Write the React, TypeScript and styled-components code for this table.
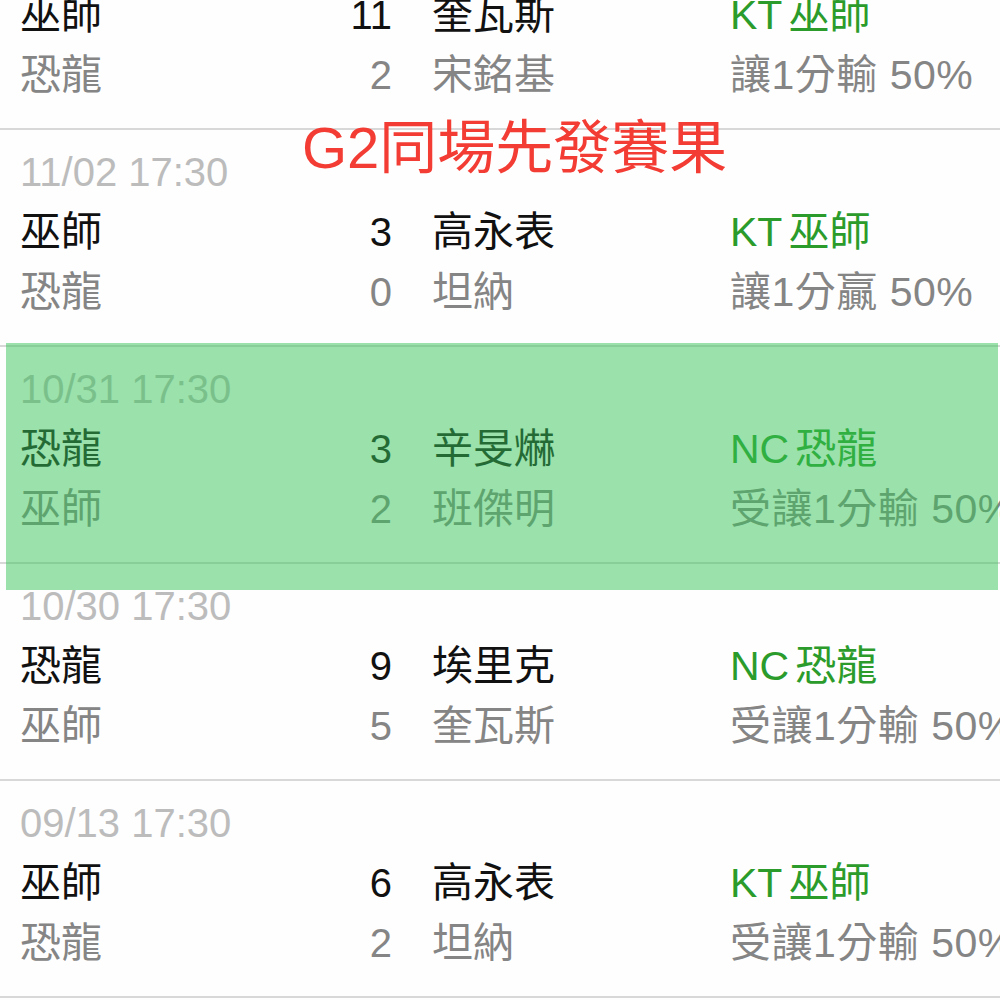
import React from 'react';
import styled, { createGlobalStyle } from 'styled-components';

type Match = {
  date?: string;
  home: string;
  away: string;
  homeScore: number;
  awayScore: number;
  homePitcher: string;
  awayPitcher: string;
  pick: string;
  result: string;
};

const matches: Match[] = [
  {
    home: '巫師',
    away: '恐龍',
    homeScore: 11,
    awayScore: 2,
    homePitcher: '奎瓦斯',
    awayPitcher: '宋銘基',
    pick: 'KT巫師',
    result: '讓1分輸 50%',
  },
  {
    date: '11/02 17:30',
    home: '巫師',
    away: '恐龍',
    homeScore: 3,
    awayScore: 0,
    homePitcher: '高永表',
    awayPitcher: '坦納',
    pick: 'KT巫師',
    result: '讓1分贏 50%',
  },
  {
    date: '10/31 17:30',
    home: '恐龍',
    away: '巫師',
    homeScore: 3,
    awayScore: 2,
    homePitcher: '辛旻爀',
    awayPitcher: '班傑明',
    pick: 'NC恐龍',
    result: '受讓1分輸 50%',
  },
  {
    date: '10/30 17:30',
    home: '恐龍',
    away: '巫師',
    homeScore: 9,
    awayScore: 5,
    homePitcher: '埃里克',
    awayPitcher: '奎瓦斯',
    pick: 'NC恐龍',
    result: '受讓1分輸 50%',
  },
  {
    date: '09/13 17:30',
    home: '巫師',
    away: '恐龍',
    homeScore: 6,
    awayScore: 2,
    homePitcher: '高永表',
    awayPitcher: '坦納',
    pick: 'KT巫師',
    result: '受讓1分輸 50%',
  },
];

const GlobalStyle = createGlobalStyle`
  html, body {
    margin: 0;
    padding: 0;
    background: #fefefe;
    overflow: hidden;
  }
  body {
    font-family: "Liberation Sans", "Noto Sans CJK TC", sans-serif;
  }
`;

const Page = styled.div`
  position: relative;
  width: 1000px;
  height: 1000px;
  overflow: hidden;
`;

// first block is scrolled partly off the top
const List = styled.div`
  margin-top: -87px;
  display: flex;
  flex-direction: column;
`;

const MatchBlock = styled.div`
  height: 217px;
  padding: 12px 0 0 20px;
  box-sizing: border-box;
  border-bottom: 2px solid #d8d8d8;
`;

const DateLine = styled.div`
  height: 60px;
  line-height: 60px;
  font-size: 40px;
  color: #bcbcbc;
`;

const Grid = styled.div`
  display: grid;
  grid-template-columns: 300px 72px 338px 1fr;
  grid-auto-rows: 60px;
  align-items: center;
  white-space: nowrap;
`;

const Cell = styled.div<{ $muted?: boolean }>`
  line-height: 60px;
  font-size: 41px;
  color: ${({ $muted }) => ($muted ? '#858585' : '#111')};
`;

const Score = styled(Cell)`
  text-align: right;
  font-size: 40px;
`;

const Pitcher = styled(Cell)`
  padding-left: 40px;
`;

const Pick = styled(Cell)`
  color: #2b9c2b;
  word-spacing: 0;

  span {
    margin-left: 6px;
  }
`;

const Result = styled(Cell)`
  color: #858585;
  letter-spacing: 0.5px;
`;

const Highlight = styled.div`
  position: absolute;
  top: 343px;
  left: 6px;
  width: 992px;
  height: 247px;
  background: rgba(55, 195, 89, 0.5);
`;

const Caption = styled.div`
  position: absolute;
  top: 113px;
  left: 302px;
  font-size: 58px;
  line-height: 70px;
  color: #f33d34;
  white-space: nowrap;
`;

const splitPick = (pick: string) => {
  const latin = pick.match(/^[A-Z]+/)?.[0] ?? '';
  return [latin, pick.slice(latin.length)];
};

const App = () => (
  <Page>
    <GlobalStyle />
    <List>
      {matches.map((m, i) => {
        const [code, team] = splitPick(m.pick);
        return (
          <MatchBlock key={i}>
            <DateLine>{m.date}</DateLine>
            <Grid>
              <Cell>{m.home}</Cell>
              <Score>{m.homeScore}</Score>
              <Pitcher>{m.homePitcher}</Pitcher>
              <Pick>
                {code}
                <span>{team}</span>
              </Pick>
              <Cell $muted>{m.away}</Cell>
              <Score $muted>{m.awayScore}</Score>
              <Pitcher $muted>{m.awayPitcher}</Pitcher>
              <Result>{m.result}</Result>
            </Grid>
          </MatchBlock>
        );
      })}
    </List>
    <Highlight />
    <Caption>G2同場先發賽果</Caption>
  </Page>
);

export default App;
